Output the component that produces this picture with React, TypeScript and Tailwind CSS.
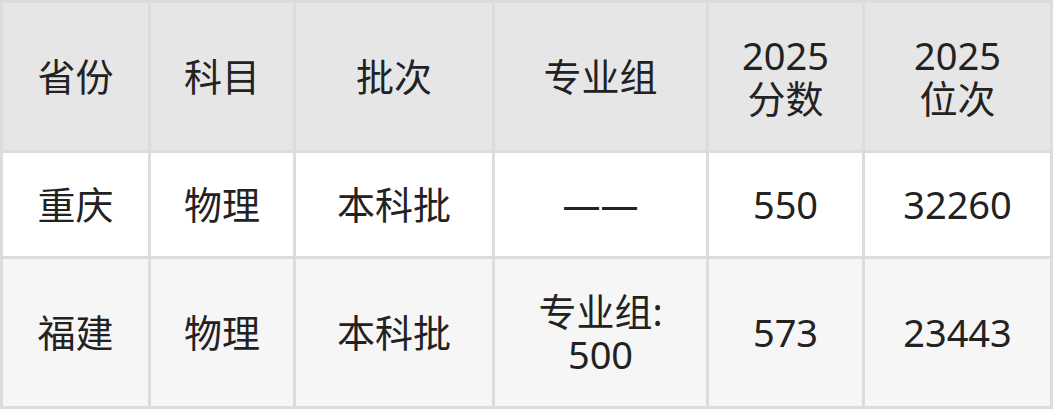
import React from 'react';

const header = ['省份', '科目', '批次', '专业组', '2025\n分数', '2025\n位次'];

const rows: { cells: string[]; bg: string }[] = [
  { cells: ['重庆', '物理', '本科批', '——', '550', '32260'], bg: 'bg-white' },
  { cells: ['福建', '物理', '本科批', '专业组:\n500', '573', '23443'], bg: 'bg-[#f6f6f6]' },
];

const Cell: React.FC<{ text: string; bg: string }> = ({ text, bg }) => (
  <div className={`${bg} flex flex-col items-center justify-center text-center`}>
    {text.split('\n').map((line, i) => (
      <span key={i} className="block">
        {line}
      </span>
    ))}
  </div>
);

export default function App() {
  return (
    <div
      className="w-[1053px] h-[410px] bg-white"
      style={{ fontFamily: '"Noto Sans", "Noto Sans CJK SC", sans-serif' }}
    >
      <div className="grid grid-cols-[145px_142px_196px_211px_153px_185px] grid-rows-[147px_103px_147px] gap-[3px] p-[3px] bg-[#dcdcdc] text-[38px] leading-[43px] text-[#222222]">
        {header.map((h, i) => (
          <Cell key={i} text={h} bg="bg-[#e6e6e6]" />
        ))}
        {rows.map((r, ri) =>
          r.cells.map((c, ci) => <Cell key={`${ri}-${ci}`} text={c} bg={r.bg} />)
        )}
      </div>
    </div>
  );
}
